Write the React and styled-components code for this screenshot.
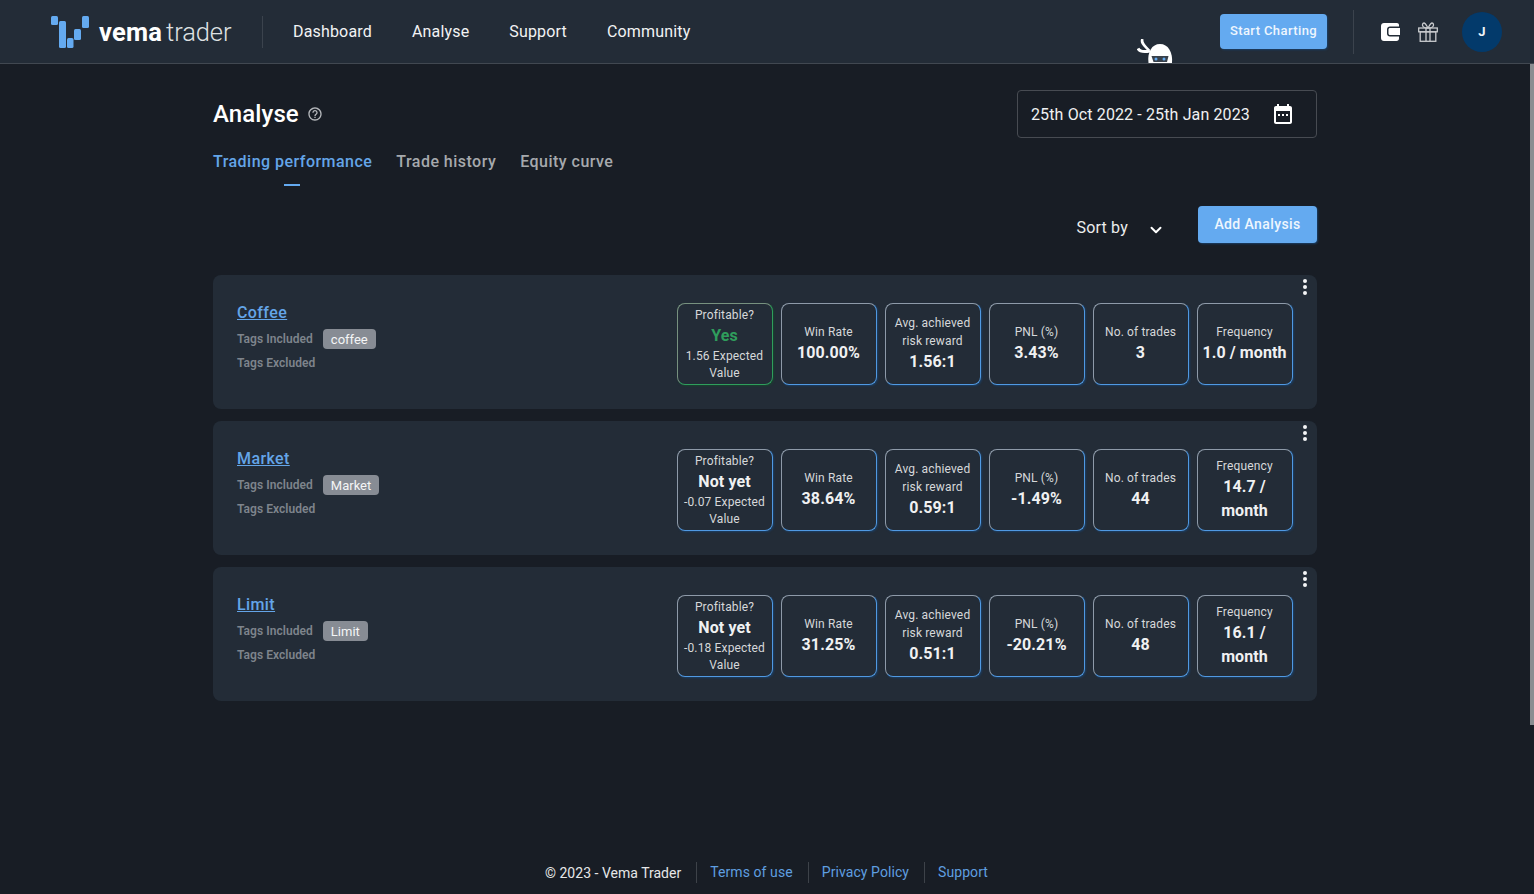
import styled, { createGlobalStyle } from "styled-components";
import { ChevronDown } from "lucide-react";

const analyses = [
  {
    name: "Coffee",
    tag: "coffee",
    profitable: "Yes",
    expected: "1.56",
    winRate: "100.00%",
    reward: "1.56:1",
    pnl: "3.43%",
    trades: "3",
    frequency: "1.0 / month",
  },
  {
    name: "Market",
    tag: "Market",
    profitable: "Not yet",
    expected: "-0.07",
    winRate: "38.64%",
    reward: "0.59:1",
    pnl: "-1.49%",
    trades: "44",
    frequency: "14.7 / month",
  },
  {
    name: "Limit",
    tag: "Limit",
    profitable: "Not yet",
    expected: "-0.18",
    winRate: "31.25%",
    reward: "0.51:1",
    pnl: "-20.21%",
    trades: "48",
    frequency: "16.1 / month",
  },
];

function Logo() {
  return (
    <svg width="38" height="32" viewBox="0 0 38 32" fill="#64aaf0">
      <rect x="0" y="0" width="7" height="9" rx="1.5" />
      <rect x="8" y="5" width="7" height="27" rx="1.5" />
      <rect x="16" y="22" width="6.5" height="10" rx="1.5" />
      <rect x="23" y="13" width="7" height="11" rx="1.5" />
      <rect x="31" y="0" width="7" height="12" rx="1.5" />
    </svg>
  );
}

function WalletIcon() {
  return (
    <svg width="19" height="18" viewBox="0 0 19 18">
      <path
        fill="#fff"
        fillRule="evenodd"
        d="M3 0H16C17 0 18 .8 18 2V3.500H9C7.300 3.500 6 4.800 6 6.500V10.500C6 12.200 7.300 13.500 9 13.500H18V15.500C18 17 17 18 15.500 18H3C1.300 18 0 16.700 0 15V3C0 1.300 1.300 0 3 0ZM9 5H19V12H9C8.200 12 7.500 11.300 7.500 10.500V6.500C7.500 5.700 8.200 5 9 5Z"
      />
      <circle cx="13" cy="8.300" r="1.700" fill="#fff" />
    </svg>
  );
}

function GiftIcon() {
  return (
    <svg width="20" height="20" viewBox="0 0 20 20" fill="none" stroke="#c9cbce" strokeWidth="1.3">
      <rect x="0.7" y="6" width="18.600" height="3.800" />
      <rect x="2.200" y="9.800" width="15.600" height="9.500" />
      <path d="M8 6V19.300M12 6V19.300" />
      <path d="M10 6C8.500 3.500 7.500 1 6 1C4.500 1 4 3 5 4.500C5.800 5.700 8 6 10 6ZM10 6C11.500 3.500 12.500 1 14 1C15.500 1 16 3 15 4.500C14.200 5.700 12 6 10 6Z" />
    </svg>
  );
}

function CalendarIcon() {
  return (
    <svg width="18" height="20" viewBox="0 0 18 20" fill="#fff">
      <path
        fillRule="evenodd"
        d="M3 0H5V2H13V0H15V2H16C17.100 2 18 2.900 18 4V18C18 19.100 17.100 20 16 20H2C.9 20 0 19.100 0 18V4C0 2.900 .9 2 2 2H3ZM2 7V18H16V7Z"
      />
      <rect x="4" y="10" width="2" height="2" />
      <rect x="8" y="10" width="2" height="2" />
      <rect x="12" y="10" width="2" height="2" />
    </svg>
  );
}

function HelpIcon() {
  return (
    <svg width="16" height="16" viewBox="0 0 24 24" fill="#b4b7bb">
      <path d="M11 18h2v-2h-2v2zm1-16C6.480 2 2 6.480 2 12s4.480 10 10 10 10-4.480 10-10S17.520 2 12 2zm0 18c-4.410 0-8-3.590-8-8s3.590-8 8-8 8 3.590 8 8-3.590 8-8 8zm0-14c-2.210 0-4 1.790-4 4h2c0-1.100.9-2 2-2s2 .9 2 2c0 2-3 1.750-3 5h2c0-2.250 3-2.500 3-5 0-2.210-1.790-4-4-4z" />
    </svg>
  );
}

function Ninja() {
  return (
    <svg width="36" height="24" viewBox="0 0 36 24">
      <path d="M5.500 0C3.500 4 8 7 12 11.500" fill="none" stroke="#fff" strokeWidth="2.600" />
      <path d="M1 9.500C3 13.500 8 13 13 12" fill="none" stroke="#fff" strokeWidth="3" />
      <path d="M11.500 24C10 13 15 5 23 5C31 5 36 13 35 24Z" fill="#fff" />
      <path d="M14.500 17H31.500L30 23H16.500Z" fill="#39414b" />
      <circle cx="19" cy="20" r="1.500" fill="#64aaf0" />
      <circle cx="27" cy="20" r="1.500" fill="#64aaf0" />
    </svg>
  );
}

function Stat({ label, value }) {
  return (
    <StatBox>
      <StatLabel>{label}</StatLabel>
      <StatValue>{value}</StatValue>
    </StatBox>
  );
}

function AnalysisCard({ item }) {
  const isYes = item.profitable === "Yes";
  return (
    <Card>
      <CardInfo>
        <CardName href="#">{item.name}</CardName>
        <TagRow>
          <TagLabel>Tags Included</TagLabel>
          <Chip>{item.tag}</Chip>
        </TagRow>
        <TagRow>
          <TagLabel>Tags Excluded</TagLabel>
        </TagRow>
      </CardInfo>
      <Stats>
        <StatBox $green={isYes}>
          <StatLabel>Profitable?</StatLabel>
          <StatValue $green={isYes}>{item.profitable}</StatValue>
          <StatNote>{item.expected} Expected Value</StatNote>
        </StatBox>
        <Stat label="Win Rate" value={item.winRate} />
        <Stat label="Avg. achieved risk reward" value={item.reward} />
        <Stat label="PNL (%)" value={item.pnl} />
        <Stat label="No. of trades" value={item.trades} />
        <Stat label="Frequency" value={item.frequency} />
      </Stats>
      <Kebab>
        <span />
        <span />
        <span />
      </Kebab>
    </Card>
  );
}

export default function App() {
  return (
    <Page>
      <GlobalStyle />
      <Header>
        <LogoLink>
          <Logo />
          <LogoText>
            <b>vema</b>
            <span>trader</span>
          </LogoText>
        </LogoLink>
        <Nav>
          <NavItem>Dashboard</NavItem>
          <NavItem>Analyse</NavItem>
          <NavItem>Support</NavItem>
          <NavItem>Community</NavItem>
        </Nav>
        <HeaderRight>
          <StartButton>Start Charting</StartButton>
          <HeaderIcons>
            <WalletIcon />
            <GiftIcon />
            <Avatar>J</Avatar>
          </HeaderIcons>
        </HeaderRight>
        <NinjaSpot>
          <Ninja />
        </NinjaSpot>
      </Header>
      <Scrollbar />
      <Body>
        <Main>
          <TitleRow>
            <Title>
              <h1>Analyse</h1>
              <HelpIcon />
            </Title>
            <DateBox>
              25th Oct 2022 - 25th Jan 2023
              <CalendarIcon />
            </DateBox>
          </TitleRow>
          <Tabs>
            <Tab $active>Trading performance</Tab>
            <Tab>Trade history</Tab>
            <Tab>Equity curve</Tab>
          </Tabs>
          <Toolbar>
            <SortBy>
              Sort by
              <ChevronDown size={18} strokeWidth={2.6} color="#fff" />
            </SortBy>
            <AddButton>Add Analysis</AddButton>
          </Toolbar>
          <CardList>
            {analyses.map((item) => (
              <AnalysisCard key={item.name} item={item} />
            ))}
          </CardList>
        </Main>
        <Footer>
          <FooterText>© 2023 - Vema Trader</FooterText>
          <FooterLink>Terms of use</FooterLink>
          <FooterLink>Privacy Policy</FooterLink>
          <FooterLink>Support</FooterLink>
        </Footer>
      </Body>
    </Page>
  );
}

const GlobalStyle = createGlobalStyle`
  html, body {
    margin: 0;
    padding: 0;
    height: 100%;
    overflow: hidden;
    background: #181d25;
    font-family: Roboto, "Liberation Sans", sans-serif;
    color: #fff;
  }
`;

const Page = styled.div`
  position: relative;
  height: 894px;
  display: flex;
  flex-direction: column;
`;

const Header = styled.header`
  position: relative;
  flex: none;
  height: 63px;
  display: flex;
  align-items: center;
  background: #232c37;
  border-bottom: 1px solid #414851;
  padding: 0 32px 0 51px;
`;

const LogoLink = styled.div`
  display: flex;
  align-items: center;
  gap: 10px;
  width: 211px;
  height: 32px;
  border-right: 1px solid #3b434d;
`;

const LogoText = styled.div`
  font-size: 25.5px;
  line-height: 32px;
  color: #fff;
  white-space: nowrap;

  b {
    font-weight: 700;
    letter-spacing: 0.2px;
  }

  span {
    font-weight: 300;
    margin-left: 4px;
    letter-spacing: -0.1px;
    color: #dfe1e3;
  }
`;

const Nav = styled.nav`
  display: flex;
  gap: 40px;
  margin-left: 30px;
`;

const NavItem = styled.a`
  font-size: 16px;
  line-height: 24px;
  letter-spacing: 0.17px;
  color: #f2f3f4;
`;

const HeaderRight = styled.div`
  display: flex;
  align-items: center;
  margin-left: auto;
`;

const StartButton = styled.button`
  width: 107px;
  height: 35px;
  border: 0;
  border-radius: 4px;
  background: #64aaf0;
  color: #eef6fe;
  font-family: inherit;
  font-size: 13px;
  font-weight: 500;
  letter-spacing: 0.4px;
  padding: 0 0 2px;
  box-shadow: 1px 1px 2px #1a3f66;
`;

const HeaderIcons = styled.div`
  display: flex;
  align-items: center;
  height: 44px;
  margin-left: 26px;
  padding-left: 27px;
  border-left: 1px solid #3b434d;
  gap: 18px;
`;

const Avatar = styled.div`
  width: 40px;
  height: 40px;
  margin-left: 6px;
  border-radius: 50%;
  background: #033a6b;
  color: #f0f4f8;
  font-size: 13px;
  font-weight: 700;
  display: flex;
  align-items: center;
  justify-content: center;
`;

const NinjaSpot = styled.div`
  position: absolute;
  left: 1137px;
  bottom: 0;
  height: 24px;
`;

const Scrollbar = styled.div`
  position: absolute;
  top: 64px;
  right: 0;
  width: 4px;
  height: 661px;
  background: #8a8d91;
`;

const Body = styled.div`
  flex: 1;
  display: flex;
  flex-direction: column;
  padding-right: 4px;
`;

const Main = styled.main`
  width: 1104px;
  margin: 0 auto;
  padding-top: 26px;
`;

const TitleRow = styled.div`
  display: flex;
  align-items: center;
  justify-content: space-between;
`;

const Title = styled.div`
  display: flex;
  align-items: center;
  gap: 8px;

  h1 {
    margin: 0;
    font-size: 24px;
    line-height: 32px;
    font-weight: 500;
    letter-spacing: 0.1px;
  }
`;

const DateBox = styled.div`
  box-sizing: border-box;
  width: 300px;
  height: 48px;
  padding: 0 24px 0 13px;
  display: flex;
  align-items: center;
  justify-content: space-between;
  border: 1px solid #474b52;
  border-radius: 4px;
  font-size: 16px;
  letter-spacing: 0.13px;
  color: #f0f1f2;
`;

const Tabs = styled.div`
  display: flex;
  gap: 24px;
`;

const Tab = styled.div`
  position: relative;
  height: 48px;
  line-height: 47px;
  font-size: 16px;
  font-weight: 500;
  letter-spacing: 0.47px;
  color: ${({ $active }) => ($active ? "#64a5e8" : "#a6a9ad")};

  &::after {
    content: "";
    display: ${({ $active }) => ($active ? "block" : "none")};
    position: absolute;
    left: 71px;
    bottom: 0;
    width: 16px;
    height: 2px;
    background: #64aaf0;
  }
`;

const Toolbar = styled.div`
  display: flex;
  justify-content: flex-end;
  align-items: flex-start;
  margin: 20px 0 32px;
`;

const SortBy = styled.div`
  display: flex;
  align-items: center;
  gap: 19px;
  margin: 10px 33px 0 0;
  font-size: 16px;
  line-height: 24px;
  letter-spacing: 0.2px;
  color: #eceded;

  svg {
    margin-top: 3px;
  }
`;

const AddButton = styled.button`
  width: 119px;
  height: 37px;
  border: 0;
  border-radius: 4px;
  background: #64aaf0;
  color: #eef6fe;
  font-family: inherit;
  font-size: 14px;
  font-weight: 500;
  letter-spacing: 0.4px;
  padding: 0 0 2px;
  box-shadow: 1px 1px 2px #1a3f66;
`;

const CardList = styled.div`
  display: flex;
  flex-direction: column;
  gap: 12px;
`;

const Card = styled.section`
  position: relative;
  box-sizing: border-box;
  height: 134px;
  padding: 28px 24px 24px;
  display: flex;
  justify-content: space-between;
  background: #232c37;
  border-radius: 8px;
`;

const CardInfo = styled.div`
  display: flex;
  flex-direction: column;
`;

const CardName = styled.a`
  align-self: flex-start;
  height: 20px;
  font-size: 16px;
  line-height: 20px;
  font-weight: 500;
  letter-spacing: 0.4px;
  color: #64a5e8;
  text-decoration: underline;
  margin-bottom: 4px;
`;

const TagRow = styled.div`
  display: flex;
  align-items: center;
  gap: 10px;
  height: 24px;
`;

const TagLabel = styled.span`
  font-size: 12px;
  font-weight: 600;
  letter-spacing: 0.05px;
  color: #7e848c;
`;

const Chip = styled.span`
  height: 20px;
  padding: 0 8px;
  border-radius: 4px;
  background: #878c94;
  color: #f4f5f6;
  font-size: 13px;
  line-height: 21px;
`;

const Stats = styled.div`
  display: flex;
  gap: 8px;
`;

const StatBox = styled.div`
  box-sizing: border-box;
  width: 96px;
  height: 82px;
  padding: 0 5px 0 4px;
  display: flex;
  flex-direction: column;
  align-items: center;
  justify-content: center;
  text-align: center;
  border: 1px solid;
  border-color: ${({ $green }) =>
    $green ? "#77917f #2f9d5c #2f9d5c #77917f" : "#8e9aa8 #5099e2 #5099e2 #8e9aa8"};
  border-radius: 8px;
  box-shadow: 1px 1px 2px ${({ $green }) => ($green ? "#17452e" : "#1a3f66")};
`;

const StatLabel = styled.div`
  font-size: 12px;
  line-height: 18px;
  letter-spacing: 0.15px;
  color: #d6d8da;
`;

const StatValue = styled.div`
  font-size: 16px;
  line-height: 24px;
  font-weight: 700;
  letter-spacing: 0.1px;
  color: ${({ $green }) => ($green ? "#2f9d5c" : "#f0f1f2")};
`;

const StatNote = styled.div`
  font-size: 12px;
  line-height: 17px;
  letter-spacing: 0.15px;
  color: #d6d8da;
`;

const Kebab = styled.div`
  position: absolute;
  top: 4px;
  right: 10px;
  display: flex;
  flex-direction: column;
  gap: 2px;

  span {
    width: 4px;
    height: 4px;
    border-radius: 50%;
    background: #f4f5f6;
  }
`;

const Footer = styled.footer`
  margin-top: auto;
  height: 43px;
  box-sizing: border-box;
  padding-left: 3px;
  display: flex;
  align-items: center;
  justify-content: center;
  font-size: 14px;
`;

const FooterText = styled.span`
  color: #e6e7e8;
  padding-right: 15px;
  letter-spacing: 0.02px;
`;

const FooterLink = styled.a`
  height: 21px;
  line-height: 21px;
  padding: 0 15px 0 13px;
  border-left: 1px solid #3d4249;
  color: #5f9fe0;
  letter-spacing: 0.08px;

  &:last-child {
    padding-right: 0;
  }
`;
